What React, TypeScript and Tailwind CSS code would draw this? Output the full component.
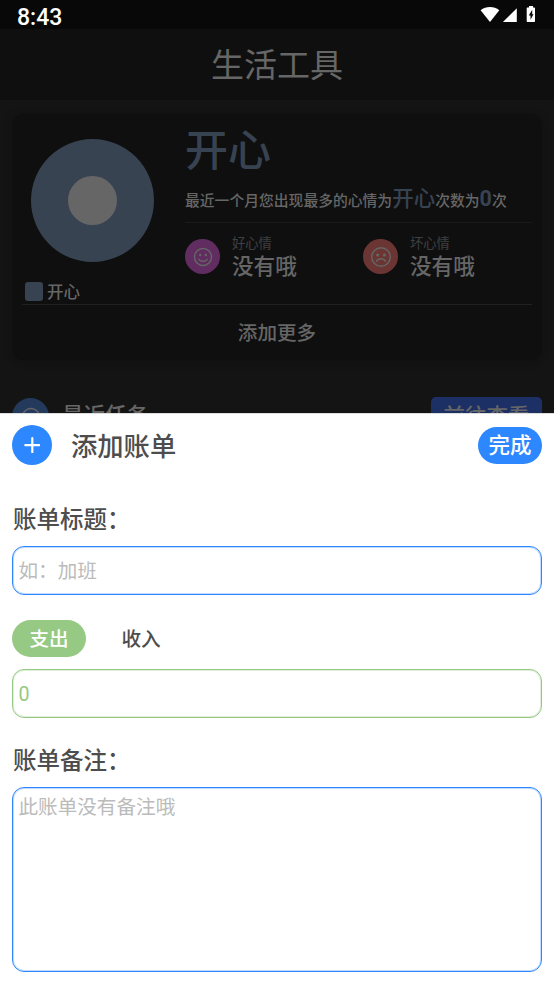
import { useState } from "react";

function StatusBar() {
  return (
    <div className="flex h-[29px] items-start justify-between bg-[#080808] pl-[17px] pr-[18px] text-white">
      <span className="pt-[6px] text-[23px] leading-6 font-medium">8:43</span>
      <svg className="mt-[5px] h-[19px] w-[56px]" viewBox="0 0 56 19" fill="currentColor">
        <path d="M.6 5.200C6 .9 14 .9 19.300 5.200L10 16.900Z" />
        <path d="M36.800 3.300V17H22.900Z" />
        <path
          fillRule="evenodd"
          d="M49 1h4v1.500h1.300c.4 0 .7.3.7.7v13c0 .5-.3.800-.7.800h-6.900c-.4 0-.7-.3-.7-.8v-13c0-.4.3-.7.7-.7H49ZM52.200 4.800 48.800 10.500h1.700v4.200l3-5.400h-1.300Z"
        />
      </svg>
    </div>
  );
}

function Face({ sad = false }: { sad?: boolean }) {
  return (
    <svg
      className="size-5"
      viewBox="0 0 20 20"
      fill="none"
      stroke="#666666"
      strokeWidth="1.400"
      strokeLinecap="round"
    >
      <circle cx="10" cy="10" r={sad ? 9.3 : 8.5} />
      {sad ? <path d="M5.600 14.200c1.800-3.300 7-3.300 8.800 0" /> : <path d="M5.800 12.300c1.600 2.500 6.800 2.500 8.400 0" />}
      <circle cx={sad ? 6.6 : 7.2} cy="8" r={sad ? 1.5 : 1.2} fill="#666666" stroke="none" />
      <circle cx={sad ? 13.4 : 12.8} cy="8" r={sad ? 1.5 : 1.2} fill="#666666" stroke="none" />
    </svg>
  );
}

function Mood({ label, value, sad = false }: { label: string; value: string; sad?: boolean }) {
  return (
    <div className="flex w-[178px] shrink-0 items-start">
      <div
        className={`mt-[6px] flex size-[35px] items-center justify-center rounded-full ${
          sad ? "bg-[#6b3533]" : "bg-[#612d60]"
        }`}
      >
        <Face sad={sad} />
      </div>
      <div className="ml-3 pt-px">
        <p className="h-[21px] text-[13.3px] leading-5 text-[#404040]">{label}</p>
        <p className="text-[21.6px] leading-[23px] font-medium text-[#666666]">{value}</p>
      </div>
    </div>
  );
}

function MoodCard() {
  return (
    <section className="mx-3 mt-[14px] h-[246px] rounded-xl bg-[#0f0f0f] px-[10px] shadow-[0_1px_7px_#101010]">
      <div className="flex h-[191px] border-b border-[#212121]">
        <div className="w-[163px] shrink-0 pt-[25px]">
          <div className="ml-[9px] flex size-[123px] items-center justify-center rounded-full bg-[#384352]">
            <div className="size-[49px] rounded-full bg-[#666666]" />
          </div>
          <div className="mt-[20px] ml-[2.500px] flex h-[19px] items-center gap-1">
            <div className="h-[19px] w-[18.500px] rounded-[3px] bg-[#384352]" />
            <span className="pt-[3px] text-[16.5px] font-medium text-[#666666]">开心</span>
          </div>
        </div>
        <div className="min-w-0 flex-1">
          <h2 className="h-[68px] text-[43px] leading-[74px] font-medium text-[#384352]">开心</h2>
          <p className="h-[41px] border-b border-[#1a1a1a] text-[14.8px] leading-[39px] font-medium whitespace-nowrap text-[#666666]">
            最近一个月您出现最多的心情为
            <span className="text-[21.5px] leading-none text-[#384352]">开心</span>
            次数为
            <span className="text-[21.5px] leading-none font-bold text-[#384352]">0</span>次
          </p>
          <div className="flex pt-[10px]">
            <Mood label="好心情" value="没有哦" />
            <Mood label="坏心情" value="没有哦" sad />
          </div>
        </div>
      </div>
      <button className="block h-[55px] w-full pt-[3px] text-[19.6px] font-medium text-[#666666]">添加更多</button>
    </section>
  );
}

function RecentTasks() {
  return (
    <div className="mx-3 mt-[37px] flex items-start">
      <div className="mt-px flex size-[37px] items-center justify-center rounded-full bg-[#233a5c]">
        <Face />
      </div>
      <h3 className="ml-[13px] text-[21.5px] leading-[38px] font-medium text-[#666666]">最近任务</h3>
      <button className="ml-auto h-9 w-[111px] rounded-[5px] bg-[#1d3066] pt-[3px] text-[21.5px] leading-8 font-medium text-[#666666]">
        前往查看
      </button>
    </div>
  );
}

function BillSheet() {
  const [kind, setKind] = useState("支出");
  const [title, setTitle] = useState("");
  const [amount, setAmount] = useState("0");
  const [note, setNote] = useState("");

  return (
    <div className="h-[571px] border-t border-[#dddddd] bg-white px-3 pt-[11px] text-[#4d4d4d]">
      <div className="flex h-10 items-center">
        <div className="flex size-10 items-center justify-center rounded-full bg-[#2d87ff]">
          <svg className="size-4" viewBox="0 0 16 16" stroke="white" strokeWidth="2.200" strokeLinecap="round">
            <path d="M8.300 1.200v14M1.300 8.200h14" />
          </svg>
        </div>
        <h1 className="ml-[19px] pt-[3px] text-[26.3px] leading-10 font-medium">添加账单</h1>
        <button className="ml-auto h-[37px] w-16 rounded-full bg-[#2d87ff] text-[21.5px] leading-[38px] font-medium text-white">
          完成
        </button>
      </div>

      <label className="mt-[33px] block h-12 pl-px text-[23.5px] leading-[44px] font-medium">账单标题：</label>
      <input
        className="block h-[49px] w-full rounded-xl border border-[#2d87ff] pt-[2px] pl-[5.500px] text-[19.6px] shadow-[inset_0_0_0_1px_#2d87ff4d] outline-none placeholder:text-[#bbbbbb]"
        placeholder="如：加班"
        value={title}
        onChange={(e) => setTitle(e.target.value)}
      />

      <div className="mt-[25px] flex gap-[18px]">
        {["支出", "收入"].map((k) => (
          <button
            key={k}
            onClick={() => setKind(k)}
            className={`h-[37px] w-[74px] rounded-full pt-px text-[19.6px] leading-[37px] font-medium ${
              kind === k ? "bg-[#96c984] text-white" : ""
            }`}
          >
            {k}
          </button>
        ))}
      </div>
      <input
        className="mt-3 block h-[49px] w-full rounded-xl border border-[#96c984] pt-[2px] pl-[5.500px] text-[19.6px] text-[#96c984] shadow-[inset_0_0_0_1px_#96c9844d] outline-none"
        value={amount}
        onChange={(e) => setAmount(e.target.value)}
      />

      <label className="mt-[21px] block h-12 pl-px text-[23.5px] leading-[44px] font-medium">账单备注：</label>
      <textarea
        className="block h-[185px] w-full resize-none rounded-xl border border-[#2d87ff] pt-[5px] pl-[5.500px] text-[19.6px] leading-[29px] shadow-[inset_0_0_0_1px_#2d87ff4d] outline-none placeholder:text-[#bbbbbb]"
        placeholder="此账单没有备注哦"
        value={note}
        onChange={(e) => setNote(e.target.value)}
      />
    </div>
  );
}

export default function App() {
  return (
    <main className="h-[984px] w-[554px] overflow-hidden bg-[#141414] font-[Roboto,'Noto_Sans_CJK_SC',sans-serif]">
      <div className="h-[413px] overflow-hidden">
        <StatusBar />
        <header className="h-[71px] bg-[#0f0f0f] text-center text-[33px] leading-[74px] font-normal text-[#666666]">
          生活工具
        </header>
        <MoodCard />
        <RecentTasks />
      </div>
      <BillSheet />
    </main>
  );
}
